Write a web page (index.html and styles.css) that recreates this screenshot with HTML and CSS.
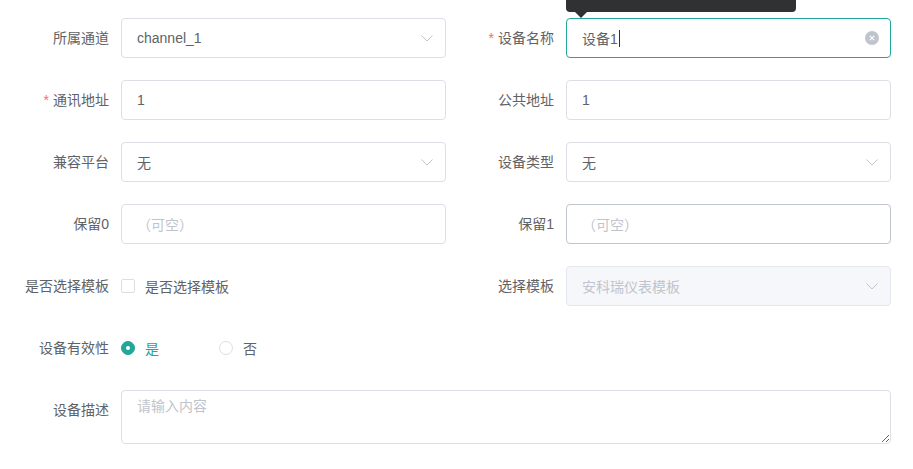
FILE: index.html
```html
<!DOCTYPE html>
<html>
  <head>
    <meta charset="UTF-8">
    <meta name="viewport" content="width=device-width, initial-scale=1.0">
    <title>设备编辑</title>
    <link rel="stylesheet" href="styles.css">
  </head>
  <body>
    <form class="form">
      <div class="row">
        <div class="item">
          <label class="label">所属通道</label>
          <div class="content">
            <div class="select">
              <span class="value">channel_1</span>
              <svg class="arrow" width="12" height="7" viewBox="0 0 12 7"><path d="M0.5 0.5 L6 6 L11.5 0.5" fill="none" stroke="#c0c4cc" stroke-width="1"/></svg>
            </div>
          </div>
        </div>
        <div class="item">
          <label class="label"><span class="star">*</span>设备名称</label>
          <div class="content">
            <!-- 校验提示 -->
            <div class="tooltip"></div>
            <div class="input focus">
              <span class="value">设备1<span class="caret"></span></span>
              <span class="clear">
                <svg width="14" height="14" viewBox="0 0 14 14"><circle cx="7" cy="7" r="7" fill="#c0c4cc"/><path d="M4.8 4.8 L9.2 9.2 M9.2 4.8 L4.8 9.2" stroke="#fff" stroke-width="1.1"/></svg>
              </span>
            </div>
          </div>
        </div>
      </div>

      <div class="row">
        <div class="item">
          <label class="label"><span class="star">*</span>通讯地址</label>
          <div class="content">
            <div class="input"><span class="value">1</span></div>
          </div>
        </div>
        <div class="item">
          <label class="label">公共地址</label>
          <div class="content">
            <div class="input"><span class="value">1</span></div>
          </div>
        </div>
      </div>

      <div class="row">
        <div class="item">
          <label class="label">兼容平台</label>
          <div class="content">
            <div class="select">
              <span class="value">无</span>
              <svg class="arrow" width="12" height="7" viewBox="0 0 12 7"><path d="M0.5 0.5 L6 6 L11.5 0.5" fill="none" stroke="#c0c4cc" stroke-width="1"/></svg>
            </div>
          </div>
        </div>
        <div class="item">
          <label class="label">设备类型</label>
          <div class="content">
            <div class="select">
              <span class="value">无</span>
              <svg class="arrow" width="12" height="7" viewBox="0 0 12 7"><path d="M0.5 0.5 L6 6 L11.5 0.5" fill="none" stroke="#c0c4cc" stroke-width="1"/></svg>
            </div>
          </div>
        </div>
      </div>

      <div class="row">
        <div class="item">
          <label class="label">保留0</label>
          <div class="content">
            <div class="input"><span class="placeholder">（可空）</span></div>
          </div>
        </div>
        <div class="item">
          <label class="label">保留1</label>
          <div class="content">
            <div class="input hover"><span class="placeholder">（可空）</span></div>
          </div>
        </div>
      </div>

      <div class="row">
        <div class="item">
          <label class="label">是否选择模板</label>
          <div class="content">
            <span class="checkbox"><span class="box"></span><span class="text">是否选择模板</span></span>
          </div>
        </div>
        <div class="item">
          <label class="label">选择模板</label>
          <div class="content">
            <div class="select disabled">
              <span class="value">安科瑞仪表模板</span>
              <svg class="arrow" width="12" height="7" viewBox="0 0 12 7"><path d="M0.5 0.5 L6 6 L11.5 0.5" fill="none" stroke="#c0c4cc" stroke-width="1"/></svg>
            </div>
          </div>
        </div>
      </div>

      <div class="row">
        <div class="item">
          <label class="label">设备有效性</label>
          <div class="content">
            <span class="radio checked"><span class="dot"></span><span class="text">是</span></span>
            <span class="radio"><span class="dot"></span><span class="text">否</span></span>
          </div>
        </div>
      </div>

      <div class="row">
        <div class="item wide">
          <label class="label">设备描述</label>
          <div class="content">
            <textarea class="textarea" rows="2" placeholder="请输入内容"></textarea>
          </div>
        </div>
      </div>
    </form>
  </body>
</html>
```

FILE: styles.css
```css
* {
  margin: 0;
  padding: 0;
  box-sizing: border-box;
}

body {
  font-family: "Liberation Sans", "Noto Sans CJK SC", sans-serif;
  font-size: 14px;
  color: #606266;
  background-color: #fff;
}

.form {
  width: 891px;
  padding: 18px 0 0 1px;
}

.row {
  display: flex;
}

.item {
  display: flex;
  width: 445px;
  margin-bottom: 22px;
}
.item.wide {
  width: 890px;
}

.label {
  width: 120px;
  flex-shrink: 0;
  padding-right: 12px;
  text-align: right;
  line-height: 40px;
  color: #606266;
}
.label .star {
  color: #f56c6c;
  margin-right: 4px;
}

.content {
  position: relative;
  flex: 1;
  display: flex;
  align-items: center;
  min-height: 40px;
}

.input,
.select {
  display: flex;
  align-items: center;
  width: 100%;
  height: 40px;
  padding: 0 15px;
  border: 1px solid #dcdfe6;
  border-radius: 4px;
  background-color: #fff;
}
.input.focus {
  border-color: #22a699;
}
.input.hover {
  border-color: #c0c4cc;
}
.value {
  flex: 1;
  color: #606266;
}
.placeholder {
  flex: 1;
  color: #c0c4cc;
}
.caret {
  display: inline-block;
  width: 1px;
  height: 17px;
  margin-left: 1px;
  vertical-align: -3px;
  background-color: #303133;
}
.clear {
  display: flex;
  margin-right: -4px;
}

.select .arrow {
  margin-right: -3px;
}
.select.disabled {
  background-color: #f5f7fa;
  border-color: #e4e7ed;
}
.select.disabled .value {
  color: #c0c4cc;
}

/* 输入框上方的校验提示 */
.tooltip {
  position: absolute;
  left: 0;
  top: -40px;
  width: 230px;
  height: 34px;
  border-radius: 4px;
  background-color: #303133;
}
.tooltip::after {
  content: "";
  position: absolute;
  left: 9px;
  bottom: -6px;
  border-left: 6px solid transparent;
  border-right: 6px solid transparent;
  border-top: 6px solid #303133;
}

.checkbox {
  display: flex;
  align-items: center;
}
.checkbox .box {
  width: 14px;
  height: 14px;
  border: 1px solid #dcdfe6;
  border-radius: 2px;
  background-color: #fff;
}
.checkbox .text {
  padding-left: 10px;
  color: #606266;
}

.radio {
  display: flex;
  align-items: center;
  margin-right: 60px;
}
.radio .dot {
  position: relative;
  width: 14px;
  height: 14px;
  border: 1px solid #dcdfe6;
  border-radius: 50%;
  background-color: #fff;
}
.radio .text {
  padding-left: 10px;
  color: #606266;
}
.radio.checked .dot {
  border-color: #22a699;
  background-color: #22a699;
}
.radio.checked .dot::after {
  content: "";
  position: absolute;
  left: 50%;
  top: 50%;
  width: 4px;
  height: 4px;
  margin: -2px 0 0 -2px;
  border-radius: 50%;
  background-color: #fff;
}
.radio.checked .text {
  color: #22a699;
}

.textarea {
  display: block;
  width: 100%;
  height: 54px;
  padding: 5px 15px;
  border: 1px solid #dcdfe6;
  border-radius: 4px;
  font-family: inherit;
  font-size: 14px;
  line-height: 1.5;
  color: #606266;
  outline: none;
  resize: vertical;
}
.textarea::placeholder {
  color: #c0c4cc;
}
.item.wide .content {
  align-items: flex-start;
}
```
